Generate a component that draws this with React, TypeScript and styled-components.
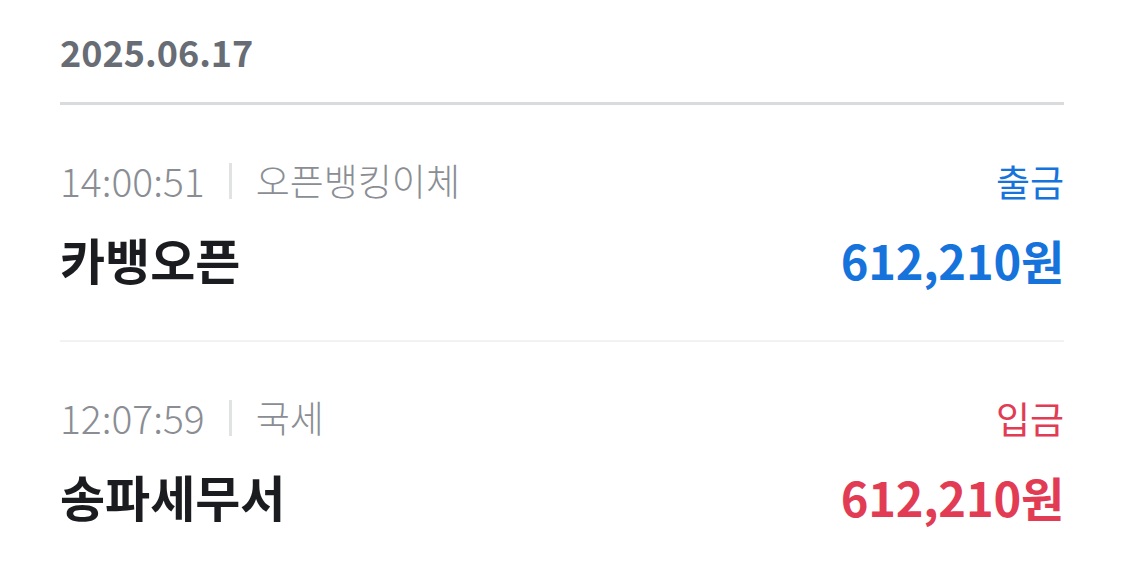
import React from "react";
import styled, { createGlobalStyle } from "styled-components";

const GlobalStyle = createGlobalStyle`
  html, body {
    margin: 0;
    padding: 0;
    background: #ffffff;
  }
  body {
    font-family: "Noto Sans CJK KR", "Noto Sans", sans-serif;
  }
`;

const Page = styled.div`
  padding: 33px 61px 0 60px;
  display: flex;
  flex-direction: column;
`;

const DateHeader = styled.div`
  font-size: 36px;
  line-height: 36px;
  font-weight: 700;
  color: #686c74;
  margin-bottom: 33px;
`;

const Divider = styled.div<{ $thick?: boolean }>`
  height: ${(p) => (p.$thick ? "3px" : "2px")};
  background: ${(p) => (p.$thick ? "#dadbdd" : "#f1f2f4")};
`;

const Row = styled.div`
  display: flex;
  flex-direction: column;
  gap: 34px;
  padding: 56px 0 57px;
`;

const Line = styled.div`
  display: flex;
  justify-content: space-between;
  align-items: baseline;
`;

const Meta = styled.div`
  display: flex;
  align-items: center;
  font-size: 39px;
  line-height: 39px;
  font-weight: 300;
  color: #8a8e94;
`;

const Sep = styled.span`
  width: 3px;
  height: 36px;
  background: #e1e2e4;
  margin: 0 24px 0 24px;
`;

const Category = styled.span`
  font-size: 37px;
`;

const Kind = styled.div<{ $color: string }>`
  font-size: 37px;
  line-height: 39px;
  font-weight: 400;
  color: ${(p) => p.$color};
`;

const Name = styled.div`
  font-size: 49px;
  line-height: 47px;
  font-weight: 700;
  color: #1b1c1f;
`;

const Amount = styled.div<{ $color: string }>`
  font-size: 47px;
  line-height: 47px;
  font-weight: 700;
  color: ${(p) => p.$color};
  letter-spacing: -0.2px;
`;

type Tx = {
  time: string;
  category: string;
  kind: string;
  name: string;
  amount: string;
  color: string;
};

const txs: Tx[] = [
  {
    time: "14:00:51",
    category: "오픈뱅킹이체",
    kind: "출금",
    name: "카뱅오픈",
    amount: "612,210원",
    color: "#1673db",
  },
  {
    time: "12:07:59",
    category: "국세",
    kind: "입금",
    name: "송파세무서",
    amount: "612,210원",
    color: "#e23c55",
  },
];

export default function App() {
  return (
    <>
      <GlobalStyle />
      <Page>
        <DateHeader>2025.06.17</DateHeader>
        <Divider $thick />
        {txs.map((t, i) => (
          <React.Fragment key={t.time}>
            {i > 0 && <Divider />}
            <Row>
              <Line>
                <Meta>
                  <span>{t.time}</span>
                  <Sep />
                  <Category>{t.category}</Category>
                </Meta>
                <Kind $color={t.color}>{t.kind}</Kind>
              </Line>
              <Line>
                <Name>{t.name}</Name>
                <Amount $color={t.color}>{t.amount}</Amount>
              </Line>
            </Row>
          </React.Fragment>
        ))}
      </Page>
    </>
  );
}
